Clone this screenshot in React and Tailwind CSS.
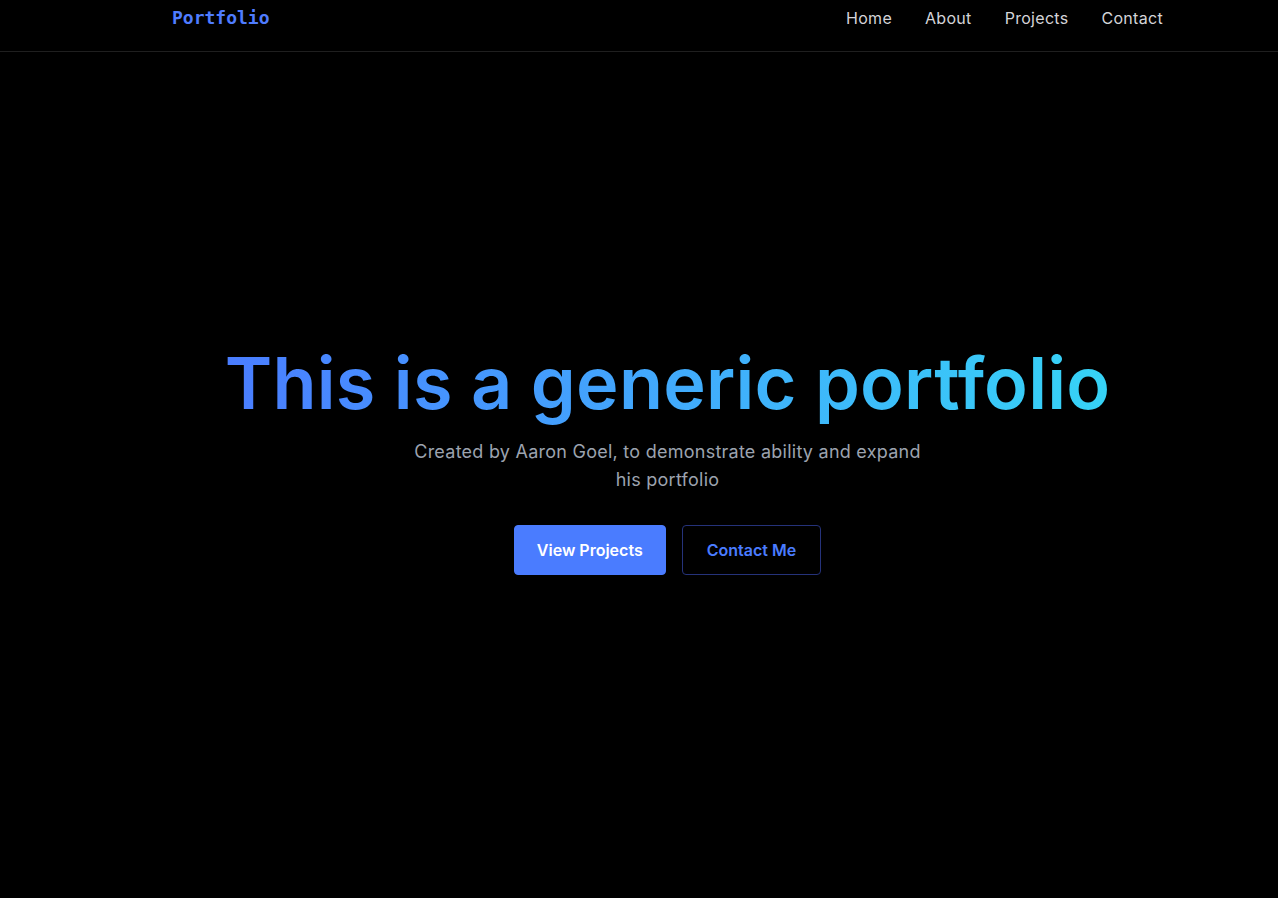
import React from "react";

export default function App() {
  const sans = { fontFamily: "Inter, 'Noto Sans', sans-serif" };
  return (
    <div className="min-h-[898px] w-full bg-black text-white" style={sans}>
      <header className="h-[52px] border-b border-[#1f1f1f]">
        <div className="flex items-start justify-between pl-[172px] pr-[115px] pt-[6px]">
          <a
            className="text-[18px] font-bold leading-[24px] text-[#4f7cff]"
            style={{ fontFamily: "'DejaVu Sans Mono', 'Liberation Mono', monospace" }}
          >
            Portfolio
          </a>
          <nav className="flex gap-[33px] text-[16px] leading-[24px] tracking-[0.3px] text-[#d4d4d8]">
            <a>Home</a>
            <a>About</a>
            <a>Projects</a>
            <a>Contact</a>
          </nav>
        </div>
      </header>
      <main className="flex flex-col items-center pl-[57px] pt-[295px] text-center">
        <h1 className="bg-gradient-to-r from-[#4a7dff] to-[#36d3f6] bg-clip-text pb-2 text-[72px] font-semibold leading-[1] tracking-[0.2px] text-transparent">
          This is a generic portfolio
        </h1>
        <p className="mt-[11px] text-[18px] leading-[28px] tracking-[0.25px] text-[#9ca3af]">
          Created by Aaron Goel, to demonstrate ability and expand
          <br />
          his portfolio
        </p>
        <div className="mt-[31px] flex gap-4">
          <button className="rounded-[4px] border border-[#4a7cff] bg-[#4a7cff] px-[22px] py-3 text-[16px] font-semibold leading-[24px] text-white">
            View Projects
          </button>
          <button className="rounded-[4px] border border-[#25327a] bg-black px-6 py-3 text-[16px] font-semibold leading-[24px] text-[#4a7cff]">
            Contact Me
          </button>
        </div>
      </main>
    </div>
  );
}
